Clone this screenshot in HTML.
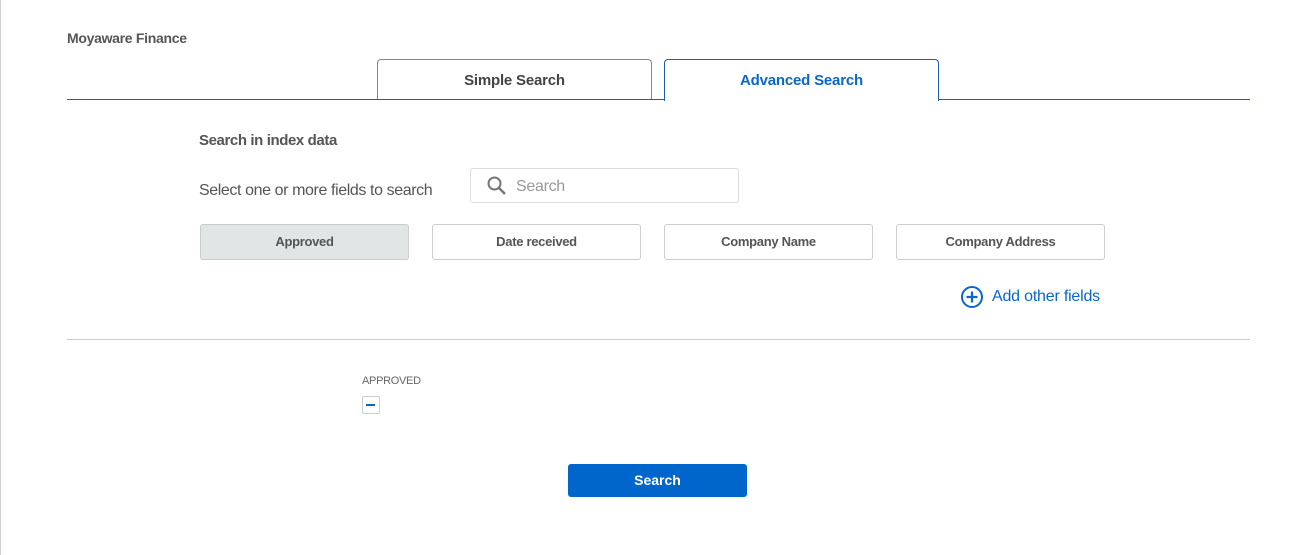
<!DOCTYPE html>
<html><head><style>
body{margin:0;width:1314px;height:555px;background:#fff;font-family:"Liberation Sans",sans-serif;color:#555;position:relative;overflow:hidden}
.a{position:absolute}
.lb{left:0;top:0;width:1px;height:555px;background:#ccc}
.btn{border:1px solid #ccc;border-radius:3px;width:207px;height:34px;top:224px;font-size:13px;font-weight:bold;text-align:center;line-height:34px;color:#555;letter-spacing:-0.3px}
.tab{top:59px;width:273px;height:39px;border:1px solid #888;border-bottom:none;border-radius:4px 4px 0 0;font-size:15px;font-weight:bold;text-align:center;line-height:42px;background:#fff;letter-spacing:-0.2px}
</style></head><body>
<div class="a lb"></div>
<div class="a" style="left:67px;top:30px;font-size:14px;font-weight:bold;letter-spacing:-0.3px">Moyaware Finance</div>
<div class="a tab" style="left:377px;color:#444">Simple Search</div>
<div class="a" style="left:67px;top:99px;width:1183px;height:1px;background:#1a5fb0"></div>
<div class="a tab" style="left:664px;border-color:#1a5fb0;color:#0a66cc;height:41px">Advanced Search</div>
<div class="a" style="left:199px;top:132px;font-size:15px;font-weight:bold;letter-spacing:-0.4px">Search in index data</div>
<div class="a" style="left:199px;top:182px;font-size:16px;letter-spacing:-0.4px">Select one or more fields to search</div>
<div class="a" style="left:470px;top:168px;width:267px;height:33px;border:1px solid #ddd;border-radius:3px"></div>
<svg class="a" style="left:486px;top:175px" width="22" height="22" viewBox="0 0 22 22"><circle cx="8.5" cy="8.5" r="6" fill="none" stroke="#777" stroke-width="2"/><path d="M13 13l6 6" stroke="#777" stroke-width="2.4"/></svg>
<div class="a" style="left:516px;top:178px;font-size:16px;color:#999;letter-spacing:-0.3px">Search</div>
<div class="a btn" style="left:200px;background:#e2e5e5">Approved</div>
<div class="a btn" style="left:432px">Date received</div>
<div class="a btn" style="left:664px">Company Name</div>
<div class="a btn" style="left:896px">Company Address</div>
<svg class="a" style="left:960px;top:285px" width="24" height="24" viewBox="0 0 24 24"><circle cx="12" cy="12" r="10" fill="none" stroke="#0a66cc" stroke-width="2"/><path d="M12 6.5v11M6.5 12h11" stroke="#0a66cc" stroke-width="2.2"/></svg>
<div class="a" style="left:992px;top:288px;font-size:16px;color:#0a66cc;letter-spacing:-0.2px">Add other fields</div>
<div class="a" style="left:67px;top:339px;width:1183px;height:1px;background:#ccc"></div>
<div class="a" style="left:362px;top:375px;font-size:11px;color:#666;letter-spacing:-0.3px">APPROVED</div>
<div class="a" style="left:362px;top:396px;width:16px;height:16px;border:1px solid #ccc;border-radius:2px"></div>
<div class="a" style="left:366px;top:404px;width:9px;height:2px;background:#0a66cc"></div>
<div class="a" style="left:568px;top:464px;width:179px;height:33px;background:#0066cc;border-radius:3px;color:#fff;font-size:14px;font-weight:bold;text-align:center;line-height:33px">Search</div>
</body></html>
